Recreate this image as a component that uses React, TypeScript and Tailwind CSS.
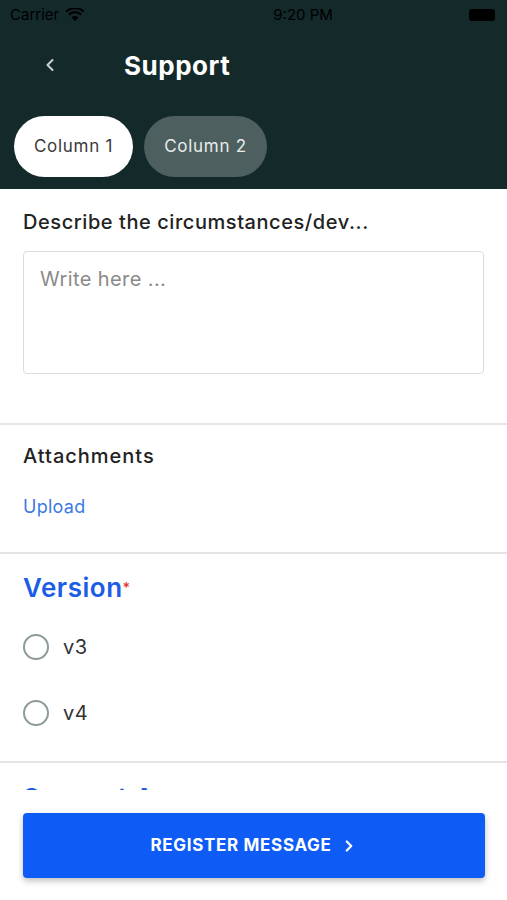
import { ChevronLeft, ChevronRight } from "lucide-react";

const font = { fontFamily: "Inter, 'Noto Sans', sans-serif" };

const Radio = ({ label }: { label: string }) => (
  <div className="flex items-center gap-[14px] h-[26px]">
    <span className="w-[26px] h-[26px] rounded-full border-2 border-[#8d9c99]" />
    <span className="text-[20px] text-[#333] tracking-[0.02em]">{label}</span>
  </div>
);

const App = () => {
  return (
    <div className="w-[507px] h-[900px] bg-white flex flex-col overflow-hidden" style={font}>
      {/* header */}
      <div className="bg-[#13292a] h-[189px] shrink-0 flex flex-col">
        <div className="h-[30px] flex items-center justify-between px-[10px] text-[15px] text-black">
          <div className="flex items-center gap-[6px]">
            <span>Carrier</span>
            <svg width="20" height="14" viewBox="0 0 20 14">
              <path d="M10 13 L6.6 9.4 A5 5 0 0 1 13.4 9.4 Z" fill="#000" />
              <path d="M3.9 6.6 A8.6 8.6 0 0 1 16.1 6.6" stroke="#000" strokeWidth="2.2" fill="none" />
              <path d="M1.2 3.8 A12.6 12.6 0 0 1 18.8 3.8" stroke="#000" strokeWidth="2.2" fill="none" />
            </svg>
          </div>
          <span className="ml-[52px]">9:20 PM</span>
          <div className="w-[26px] h-[12px] rounded-[3px] bg-black mr-[2px]" />
        </div>
        <div className="h-[70px] flex items-center">
          <ChevronLeft className="ml-[40px] w-[20px] h-[20px] text-[#c9d1d0]" strokeWidth={2.5} />
          <span className="ml-[64px] text-[26px] font-bold text-white tracking-[0.02em]">Support</span>
        </div>
        <div className="flex gap-[11px] px-[14px] pt-[16px] tracking-[0.045em]">
          <div className="w-[119px] h-[61px] rounded-full bg-white flex items-center justify-center text-[17px] text-[#3a3a3a]">
            Column 1
          </div>
          <div className="w-[123px] h-[61px] rounded-full bg-[#4d5f5f] flex items-center justify-center text-[17px] text-[#e8eceb]">
            Column 2
          </div>
        </div>
      </div>

      {/* scroll area */}
      <div className="h-[601px] overflow-hidden shrink-0">
        <div className="px-[23px] pt-[21px] pb-[49px]">
          <p className="text-[20px] leading-[24px] font-medium text-[#222] tracking-[0.028em]">Describe the circumstances/dev...</p>
          <div className="mt-[17px] h-[123px] border border-[#dcdcdc] rounded-[4px] px-[16px] pt-[12px] text-[20px] text-[#8a8a8a] tracking-[0.02em]">
            Write here ...
          </div>
        </div>
        <div className="border-t-2 border-[#e5e5e5] px-[23px] pt-[19px] pb-[33px]">
          <p className="text-[20px] leading-[24px] font-medium text-[#222] tracking-[0.05em]">Attachments</p>
          <p className="mt-[27px] text-[18px] leading-[24px] text-[#3d79e0] tracking-[0.015em]">Upload</p>
        </div>
        <div className="border-t-2 border-[#e5e5e5] px-[23px] pt-[18px] pb-[35px]">
          <p className="text-[26px] leading-[32px] font-semibold text-[#1c5ce6] tracking-[0.02em]">
            Version<span className="text-[14px] align-top text-[#e53935]">*</span>
          </p>
          <div className="mt-[30px] flex flex-col gap-[40px]">
            <Radio label="v3" />
            <Radio label="v4" />
          </div>
        </div>
        <div className="border-t-2 border-[#e5e5e5] px-[23px] pt-[19px]">
          <p className="text-[26px] leading-[32px] font-semibold text-[#1c5ce6] tracking-[0.02em]">Support Area</p>
        </div>
      </div>

      {/* footer */}
      <div className="px-[23px] pt-[23px]">
        <button className="w-[462px] h-[65px] rounded-[4px] bg-[#0e5cf5] shadow-[0_3px_6px_rgba(0,0,0,0.25)] flex items-center justify-center gap-[8px] text-white text-[17px] font-bold tracking-[0.04em]">
          REGISTER MESSAGE
          <ChevronRight className="w-[18px] h-[18px]" strokeWidth={3} />
        </button>
      </div>
    </div>
  );
};

export default App;
